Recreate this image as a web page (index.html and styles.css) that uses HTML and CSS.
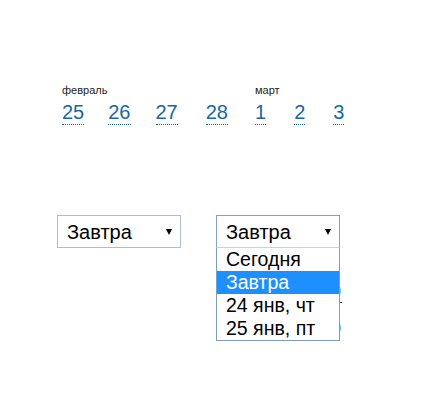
FILE: index.html
```html
<!DOCTYPE html>
<html>
<head>
<meta charset="utf-8">
<link rel="stylesheet" href="styles.css">
</head>
<body>
<div class="cal">
  <div class="month feb">
    <div class="label">февраль</div>
    <div class="days">
      <span class="day">25</span>
      <span class="day">26</span>
      <span class="day">27</span>
      <span class="day">28</span>
    </div>
  </div>
  <div class="month mar">
    <div class="label">март</div>
    <div class="days">
      <span class="day">1</span>
      <span class="day">2</span>
      <span class="day">3</span>
    </div>
  </div>
</div>

<div class="selects">
  <div class="picker">
    <span class="value">Завтра</span>
    <span class="arrow"></span>
  </div>
  <div class="picker-wrap">
    <div class="picker focused">
      <span class="value">Завтра</span>
      <span class="arrow"></span>
    </div>
    <div class="drop-row">
      <div class="dropdown">
        <div class="opt">Сегодня</div>
        <div class="opt current">Завтра</div>
        <div class="opt">24 янв, чт</div>
        <div class="opt">25 янв, пт</div>
      </div>
      <div class="peek">
        <span class="peek-digit">0</span>
        <span class="peek-tick"></span>
        <span class="peek-digit">0</span>
      </div>
    </div>
  </div>
</div>
</body>
</html>
```

FILE: styles.css
```css
html, body {
  margin: 0;
  padding: 0;
  background: #fff;
}
body {
  font-family: "Liberation Sans", Arial, sans-serif;
  color: #000;
}
.cal {
  display: flex;
  padding: 84px 0 0 62px;
}
.label {
  font-size: 11px;
  line-height: 13px;
  color: #221a24;
  margin-bottom: 3px;
}
.days {
  display: flex;
}
.day {
  font-size: 20px;
  line-height: 24px;
  color: #1866a6;
  border-bottom: 1px dotted #1866a6;
}
.feb .day:nth-child(1) { margin-right: 24px; }
.feb .day:nth-child(2) { margin-right: 25px; }
.feb .day:nth-child(3) { margin-right: 28px; }
.feb .day:nth-child(4) { margin-right: 27px; }
.mar .day { margin-right: 28px; }
.mar .day:last-child { margin-right: 0; }

.selects {
  display: flex;
  align-items: flex-start;
  gap: 35px;
  padding: 90px 0 0 57px;
}
.picker-wrap {
  width: 124px;
}
.picker {
  box-sizing: border-box;
  width: 124px;
  height: 33px;
  border: 1px solid #abbbd6;
  display: flex;
  align-items: center;
  justify-content: space-between;
  padding: 0 6px 0 9px;
  background: #fff;
}
.picker.focused {
  border-color: #7c9fe0;
}
.value {
  font-size: 20px;
  line-height: 24px;
}
.arrow {
  width: 0;
  height: 0;
  border-left: 3px solid transparent;
  border-right: 3px solid transparent;
  border-top: 6px solid #000;
  margin-right: 2px;
}
.drop-row {
  display: flex;
  align-items: flex-start;
  margin-top: -1px;
}
.dropdown {
  flex: none;
  position: relative;
  z-index: 2;
  box-sizing: border-box;
  width: 124px;
  border: 1px solid #7f9db9;
  border-top-color: #c8d2e0;
  background: #fff;
}
.opt {
  font-size: 19.5px;
  line-height: 23px;
  height: 23px;
  padding-left: 9px;
  white-space: nowrap;
}
.opt.current {
  background: #1e8fff;
  color: #fff;
}
.peek {
  flex: none;
  margin-left: -10px;
  padding-top: 32px;
  width: 16px;
  display: flex;
  flex-direction: column;
}
.peek-digit {
  font-size: 20px;
  line-height: 24px;
  height: 24px;
  color: #1866a6;
}
.peek-tick {
  width: 3px;
  height: 1px;
  margin: -1px 0 13px 9px;
  background: #444;
}
```
